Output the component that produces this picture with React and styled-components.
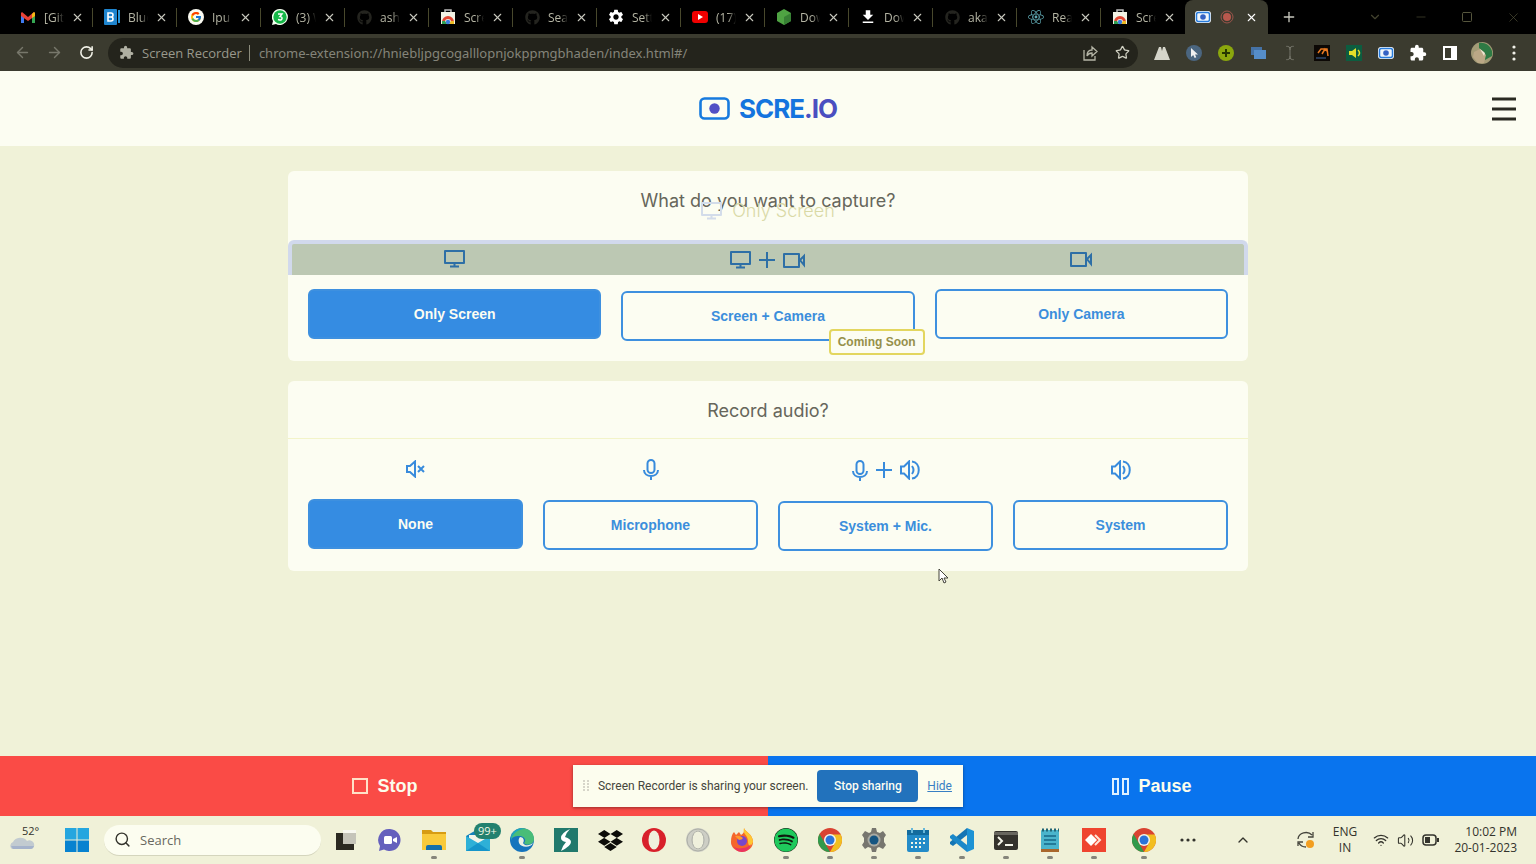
import React from 'react';
import styled, { createGlobalStyle } from 'styled-components';
import { FaDropbox, FaSpotify, FaGithub, FaReact } from 'react-icons/fa';
import { MdSettings, MdDownload, MdExtension } from 'react-icons/md';
import { FcGoogle } from 'react-icons/fc';
import { ArrowLeft, ArrowRight, RotateCw, Star, X, Plus, ChevronDown, ChevronUp, Minus, Square, Search, Wifi, Volume2, TextCursor } from 'lucide-react';

const ui = '"Open Sans", "Noto Sans", sans-serif';
const arial = '"Liberation Sans", Arial, sans-serif';

const GlobalStyle = createGlobalStyle`
  * { box-sizing: border-box; }
  body { margin: 0; background: #f0f2d8; font-family: ${ui}; }
  button { font: inherit; color: inherit; background: none; border: 0; padding: 0; cursor: pointer; }
  h1, h2 { margin: 0; font-weight: 400; }
  svg { display: block; flex: none; }
`;

const Desktop = styled.div`
  min-height: 100vh;
  display: flex;
  flex-direction: column;
`;

/* Browser chrome */
const TabStrip = styled.div`
  display: flex;
  height: 34px;
  padding-left: 9px;
  background: #000;
  color: #b5b5a4;
`;
const Tab = styled.div`
  width: 84px;
  display: flex;
  align-items: center;
  padding: 0 7px 0 11px;
  font-size: 12px;
  position: relative;
  &::after {
    content: '';
    position: absolute;
    right: 0;
    top: 8px;
    height: 19px;
    width: 1px;
    background: ${p => (p.$last ? 'transparent' : '#48482c')};
  }
`;
const TabTitle = styled.span`
  width: 20px;
  margin-left: 8px;
  margin-right: 5px;
  overflow: hidden;
  white-space: nowrap;
  mask-image: linear-gradient(90deg, #000 60%, transparent);
`;
const ActiveTab = styled.div`
  width: 83px;
  display: flex;
  align-items: center;
  justify-content: space-between;
  padding: 0 9px 0 10px;
  background: #3b3b2f;
  border-radius: 8px 8px 0 0;
`;
const IconButton = styled.button`
  display: flex;
  flex: none;
  align-items: center;
  justify-content: center;
  width: ${p => p.$w || 16}px;
  height: ${p => p.$h || 16}px;
  color: ${p => p.$color || '#c8c8be'};
`;
const NewTab = styled.div`
  display: flex;
  align-items: center;
  padding-left: 13px;
  flex: 1;
`;
const WindowControls = styled.div`
  display: flex;
  align-items: center;
`;
const Toolbar = styled.div`
  display: flex;
  align-items: center;
  height: 37px;
  padding: 0 6px;
  background: #3b3b2f;
`;
const Omnibox = styled.div`
  flex: 1;
  display: flex;
  align-items: center;
  height: 30px;
  margin-left: 6px;
  padding: 0 0 0 11px;
  border-radius: 15px;
  background: #24241c;
  color: #99998c;
  font-size: 13px;
`;
const SiteName = styled.label`
  margin-left: 8px;
  padding-right: 7px;
  border-right: 1px solid #8c8c7c;
  line-height: 16px;
  white-space: nowrap;
`;
const Address = styled.input`
  flex: 1;
  min-width: 0;
  margin-left: 9px;
  padding: 0;
  border: 0;
  outline: 0;
  background: none;
  color: #84847a;
  font: 13px "Noto Sans", ${ui};
`;
const Extensions = styled.div`
  display: flex;
  margin-left: 8px;
`;

/* Extension page */
const Header = styled.header`
  display: flex;
  align-items: center;
  justify-content: center;
  position: relative;
  height: 75px;
  background: #fcfdf2;
`;
const Brand = styled.h1`
  display: flex;
  align-items: center;
  gap: 9px;
  font: 700 26px Inter, sans-serif;
  letter-spacing: -1px;
  color: #1474de;
`;
const BrandTail = styled.span`
  color: #4a4fc0;
`;
const MenuButton = styled(IconButton)`
  position: absolute;
  right: 20px;
  top: 26px;
`;
const Main = styled.main`
  position: relative;
  flex: 1;
  display: flex;
  flex-direction: column;
  gap: 20px;
  width: 100%;
  max-width: 960px;
  margin: 0 auto;
  padding: 25px 0;
`;
const Card = styled.section`
  position: relative;
  border-radius: 6px;
  background: #fcfdf2;
`;
const CardTitle = styled.h2`
  display: flex;
  align-items: center;
  justify-content: center;
  height: 58px;
  padding-top: 2px;
  border-bottom: 1px solid ${p => (p.$line ? '#f3f4c9' : 'transparent')};
  font: 400 18px Inter, sans-serif;
  color: #66665b;
`;
const Choices = styled.div`
  position: relative;
  display: grid;
  grid-template-columns: repeat(${p => p.$columns}, 1fr);
  align-items: start;
  gap: 20px;
  padding: 20px;
`;
const Choice = styled.div`
  position: relative;
  display: flex;
  flex-direction: column;
  gap: 20px;
`;
const ChoiceIcons = styled.div`
  display: flex;
  align-items: center;
  justify-content: center;
  gap: 8px;
  height: ${p => p.$h}px;
  color: ${p => p.$color || '#388bdc'};
`;
const ChoiceButton = styled.button`
  height: 50px;
  border: 2px solid #3e90df;
  border-radius: 6px;
  background: ${p => (p.$on ? '#358ce2' : 'transparent')};
  color: ${p => (p.$on ? '#fcfdf2' : '#3b8edc')};
  font: 700 14px ${arial};
`;
const Soon = styled.span`
  position: absolute;
  right: -10px;
  bottom: -14px;
  padding: 0 7px;
  border: 2px solid #e3d65f;
  border-radius: 4px;
  background: #fcfdf2;
  color: #96904a;
  font: 700 12px/22px ${arial};
`;
const FadingPanel = styled.div`
  position: absolute;
  left: 0;
  right: 0;
  top: 69px;
  height: 35px;
  border: 4px solid #d1d9ec;
  border-bottom: 0;
  border-radius: 6px 6px 0 0;
  background: #bcc8b3;
`;
const FadingTitle = styled.div`
  position: absolute;
  left: 0;
  right: 0;
  top: 29px;
  display: flex;
  align-items: center;
  justify-content: center;
  gap: 10px;
  font: 300 18px/22px Inter, sans-serif;
  color: #d9d9a6;
`;
const FadingIcon = styled.span`
  color: #d3dcea;
`;
const Pointer = styled.svg`
  position: absolute;
  left: 650px;
  top: 422px;
`;

const Actions = styled.footer`
  position: relative;
  display: grid;
  grid-template-columns: 1fr 1fr;
  height: 60px;
`;
const Action = styled.button`
  display: flex;
  align-items: center;
  justify-content: center;
  gap: 9px;
  background: ${p => p.$bg};
  color: #fcfdec;
  font: 700 18px ${arial};
`;
const ShareBar = styled.div`
  position: absolute;
  top: 9px;
  left: 0;
  right: 0;
  width: 390px;
  height: 42px;
  margin: 0 auto;
  padding: 0 11px 0 10px;
  display: flex;
  align-items: center;
  justify-content: space-between;
  background: #fcfdee;
  box-shadow: 0 1px 3px #0006;
  font: 12px Roboto, sans-serif;
  color: #46463c;
  white-space: nowrap;
`;
const StopSharing = styled.button`
  width: 101px;
  height: 32px;
  border-radius: 4px;
  background: #2272bc;
  color: #fcfdf2;
  font-weight: 500;
`;
const HideLink = styled.a`
  color: #397fc4;
`;

/* Windows taskbar */
const Taskbar = styled.nav`
  display: flex;
  align-items: center;
  height: 48px;
  background: #f0f1d8;
  color: #33332c;
  font-size: 12px;
`;
const Weather = styled.div`
  position: relative;
  width: 55px;
  height: 48px;
  padding: 17px 0 0 9px;
`;
const Degrees = styled.span`
  position: absolute;
  left: 22px;
  top: 7px;
  font-size: 11px;
`;
const SearchBox = styled.label`
  display: flex;
  flex: none;
  align-items: center;
  gap: 9px;
  width: 217px;
  height: 31px;
  margin: 0 3px 0 5px;
  padding: 0 10px;
  border-radius: 16px;
  border-bottom: 1px solid #d4d5bd;
  background: #fcfdf0;
`;
const SearchInput = styled.input`
  width: 100%;
  border: 0;
  padding: 0;
  outline: 0;
  background: none;
  font: 13px ${ui};
  &::placeholder { color: #68685e; opacity: 1; }
`;
const TaskButton = styled.button`
  position: relative;
  display: flex;
  flex: none;
  align-items: center;
  justify-content: center;
  width: ${p => p.$w || 44}px;
  height: 48px;
  &::after {
    content: '';
    position: absolute;
    bottom: 5px;
    width: 6px;
    height: 3px;
    border-radius: 2px;
    background: ${p => (p.$open ? '#85857b' : 'transparent')};
  }
`;
const Count = styled.span`
  position: absolute;
  left: 18px;
  top: 7px;
  padding: 0 4px;
  border-radius: 8px;
  background: #23816f;
  color: #f4f8e4;
  font-size: 11px;
  line-height: 16px;
`;
const Tray = styled.div`
  display: flex;
  flex: 1;
  align-items: center;
  justify-content: flex-end;
  height: 48px;
  padding-right: 19px;
`;
const TrayText = styled.div`
  flex: none;
  line-height: 16px;
  text-align: ${p => p.$align || 'center'};
  width: ${p => p.$w}px;
`;
const TrayIcons = styled.div`
  display: flex;
  align-items: center;
  gap: 8px;
  margin: 0 6px 0 14px;
`;

/* Icons */
const Svg = ({ w = 24, h = 24, box, children, ...rest }) => (
  <svg width={w} height={h} viewBox={box || `0 0 ${w} ${h}`} fill="none" {...rest}>{children}</svg>
);
const Gmail = () => (
  <Svg w={16} h={16}>
    <path d="M1 4v10h3V7z" fill="#3f7bf0" /><path d="M15 4v10h-3V7z" fill="#35a853" />
    <path d="M1 4l1-1 6 5 6-5 1 1v3l-7 5-7-5z" fill="#e64235" /><path d="M12 5l2-2 1 1v3l-3 2z" fill="#f5b914" />
  </Svg>
);
const BlueDoc = () => (
  <Svg w={16} h={16}>
    <rect width="13" height="16" y="0" rx="1" fill="#1f85cf" /><path d="M14 1h2v13h-2z" fill="#2394da" />
    <path d="M4 4v8h3a2 2 0 0 0 0-4H4h3a2 2 0 0 0 0-4z" stroke="#fff" strokeWidth="1.6" />
  </Svg>
);
const WhatsApp = () => (
  <Svg w={16} h={16}>
    <path d="M8 0a8 8 0 1 1-4 15l-4 1 1-4A8 8 0 0 1 8 0z" fill="#f4fff0" /><circle cx="8" cy="8" r="6.7" fill="#15b848" />
    <path d="M6 5h4L8 7.500c3 0 2.500 4-.2 3.500L6 10.500" stroke="#fff" strokeWidth="1.400" />
  </Svg>
);
const WebStore = () => (
  <Svg w={16} h={16}>
    <path d="M5 4V1h6v3" stroke="#bbb" strokeWidth="1.500" /><path d="M1 3h14v12H1z" fill="#f2f2e4" />
    <path d="M2 13a6 6 0 0 1 12 0l-3 0a3 3 0 0 0-6 0z" fill="#e14632" />
    <path d="M2 12h3l2 3H2z" fill="#2ea052" /><path d="M11 12h3v3H9z" fill="#edbb24" /><circle cx="8" cy="13" r="2.200" fill="#3c7de0" />
  </Svg>
);
const GoogleBadge = () => (
  <Svg w={16} h={16}><circle cx="8" cy="8" r="8" fill="#fbfbf2" /><FcGoogle x={2} y={2} size={12} /></Svg>
);
const YouTube = () => (
  <Svg w={16} h={16}><rect y="2" width="16" height="12" rx="3" fill="#f00000" /><path d="M6 5l5 3-5 3z" fill="#fff" /></Svg>
);
const Hexagon = () => (
  <Svg w={16} h={16}><path d="M8 0l7 4v8l-7 4-7-4V4z" fill="#4fa343" /><path d="M8 8l7-4v8l-7 4z" fill="#378034" /></Svg>
);
const Recorder = () => (
  <Svg w={16} h={16}>
    <rect x="0" y="2" width="16" height="12" rx="3" fill="#f0f5fa" /><rect x="1.500" y="3.500" width="13" height="9" rx="2" stroke="#277bdc" strokeWidth="1.500" />
    <circle cx="8" cy="8" r="2.800" fill="#3461c4" />
  </Svg>
);
const Recording = () => (
  <Svg w={14} h={14}><circle cx="7" cy="7" r="6" stroke="#9c554b" /><circle cx="7" cy="7" r="4" fill="#b9584d" /></Svg>
);
const Share = () => (
  <Svg w={16} h={16} stroke="#b5b5a6" strokeWidth="1.300"><path d="M2 5v10h11v-4M5 11c0-4 2-6 5-6V2l5 4.500-5 4.500V8c-2 0-4 1-5 3z" /></Svg>
);
const Mountains = () => (
  <Svg w={16} h={16}><path d="M0 15L5 2h2l1 4 1-4h2l5 13z" fill="#d5d5ca" /></Svg>
);
const CursorBadge = () => (
  <Svg w={16} h={16}><circle cx="8" cy="8" r="8" fill="#4b6680" /><path d="M5 3v9l2.200-2 1.500 3 1.600-.8L9 9.500h3z" fill="#f0f0f0" /></Svg>
);
const AddBadge = () => (
  <Svg w={16} h={16}><circle cx="8" cy="8" r="8" fill="#8ba70d" /><path d="M8 4v8M4 8h8" stroke="#253800" strokeWidth="2" /></Svg>
);
const StackedWindows = () => (
  <Svg w={16} h={16}><path d="M1 2h11v8H1z" fill="#4572a6" /><path d="M4 5h12v9H4z" fill="#558dc9" /></Svg>
);
const Chart = () => (
  <Svg w={16} h={16}><path d="M0 0h16v16H0z" fill="#0c0805" /><path d="M2 13h10" stroke="#4368a0" /><path d="M4 8l3-4h6l1 7M8 9l3-5 3 3" stroke="#e77821" strokeWidth="1.500" /></Svg>
);
const SoundBadge = () => (
  <Svg w={16} h={16}><path d="M0 0h16v16H0z" fill="#0c5d40" /><path d="M3 6h3l4-3v10l-4-3H3z" fill="#e3df2a" /><path d="M12 5q3 3 0 6" stroke="#e3df2a" strokeWidth="1.500" /></Svg>
);
const SidePanel = () => (
  <Svg w={16} h={16}><rect x="2" y="2" width="12" height="12" stroke="#fff" strokeWidth="2" /><path d="M9 2h5v12H9z" fill="#fff" /></Svg>
);
const Avatar = () => (
  <Svg w={22} h={22}>
    <circle cx="11" cy="11" r="11" fill="#a39b76" /><path d="M8 1a11 11 0 0 1 13 13l-7 4-1-8-5-4z" fill="#2e7a44" />
    <path d="M3 10l6-3 6 6-2 8H7l-5-6z" fill="#bba886" /><path d="M9 7l5 4-1 3z" fill="#eee5d2" />
  </Svg>
);
const Dots = ({ vertical, color = '#33332c' }) => (
  <Svg w={16} h={16} fill={color}>
    {[2, 8, 14].map(n => <circle key={n} cx={vertical ? 8 : n} cy={vertical ? n : 8} r="1.600" fill={color} />)}
  </Svg>
);
const Logo = () => (
  <Svg w={31} h={24}><rect x="1.500" y="1.500" width="28" height="20" rx="4" stroke="#167ade" strokeWidth="2.600" /><circle cx="15.500" cy="11.500" r="5.200" fill="#5150c5" /></Svg>
);
const Burger = () => (
  <Svg w={24} h={24} stroke="#2a2a22" strokeWidth="3"><path d="M0 2h24M0 12h24M0 22h24" /></Svg>
);
const Monitor = () => (
  <Svg w={21} h={18} stroke="currentColor" strokeWidth="2"><path d="M1 1h19v12H1zM10.500 13v3M6 16.500h9" strokeLinejoin="round" /></Svg>
);
const Camera = () => (
  <Svg w={23} h={16} stroke="currentColor" strokeWidth="2"><path d="M1 2h15v13H1z" strokeLinejoin="round" /><path d="M17 8l4-4v9z" /></Svg>
);
const Cross = () => (
  <Svg w={16} h={16} stroke="currentColor" strokeWidth="2"><path d="M8 0v16M0 8h16" /></Svg>
);
const Mic = () => (
  <Svg w={16} h={21} stroke="currentColor" strokeWidth="2"><rect x="4.500" y="1" width="7" height="13" rx="3.500" /><path d="M1 11c0 8 14 8 14 0M8 17v4" /></Svg>
);
const Mute = () => (
  <Svg w={19} h={18} stroke="currentColor" strokeWidth="2"><path d="M1 6h3l5-4.500v15L4 12H1zM12 6l6 6M18 6l-6 6" /></Svg>
);
const Sound = () => (
  <Svg w={20} h={20} stroke="currentColor" strokeWidth="2"><path d="M1 6.500h3l5-5v17l-5-5H1zM12 6q3 4 0 8M12 1.500c9 1 9 16 0 17" /></Svg>
);
const StopIcon = () => <Svg w={18} h={18}><path d="M2 2h14v14H2z" stroke="#ffe1c8" strokeWidth="2" /></Svg>;
const PauseIcon = () => <Svg w={17} h={17}><path d="M1 1h5v15H1zM11 1h5v15h-5z" stroke="#def0ff" strokeWidth="2" /></Svg>;
const Grip = () => <Svg w={6} h={12}><path d="M1 0v12M5 0v12" stroke="#d6d5c9" strokeWidth="2" strokeDasharray="2 1" /></Svg>;
const Cloud = () => (
  <Svg w={26} h={17}><path d="M3 16a4 4 0 0 1 1-7 8 7 0 0 1 14-1 4 4 0 0 1 5 8z" fill="#c2cbd0" /><path d="M2 13h23q-1 3-4 3H4z" fill="#a5b3cb" /></Svg>
);
const WinLogo = () => (
  <Svg w={24} h={24}><path d="M0 0h11.500v11.500H0zM12.500 0H24v11.500H12.500z" fill="#25a6df" /><path d="M0 12.500h11.500V24H0zM12.500 12.500H24V24H12.500z" fill="#0782d0" /></Svg>
);
const TaskView = () => (
  <Svg w={20} h={20}><path d="M7 0h13v14H7z" fill="#c5c4b9" /><path d="M7 0h13v3H7z" fill="#f8f8f0" /><path d="M0 3h7v11h11v6H0z" fill="#2b2921" /></Svg>
);
const Teams = () => (
  <Svg><path d="M12 1a11 11 0 1 1-6 20.500L1 23l1-5A11 11 0 0 1 12 1z" fill="#6560bd" /><rect x="6" y="8" width="8" height="8" rx="1.500" fill="#fff" /><path d="M15 11l4-2v6l-4-2z" fill="#fff" /></Svg>
);
const Folder = () => (
  <Svg><path d="M0 2h9l2 2h13v18H0z" fill="#d79c13" /><path d="M0 6h24v16H0z" fill="#f9ca3a" /><path d="M4 22v-3q0-2 2-2h12q2 0 2 2v3z" fill="#1570aa" /></Svg>
);
const Mail = () => (
  <Svg><path d="M0 8l12-7 12 7v15H0z" fill="#1482bb" /><path d="M3 7h18v6l-9 5-9-5z" fill="#f2f4e8" /><path d="M0 8l12 7L24 8v15H0z" fill="#2eb0d7" /><path d="M0 23l12-8 12 8z" fill="#1595ca" /></Svg>
);
const Edge = () => (
  <Svg><circle cx="12" cy="12" r="12" fill="#1574bd" /><path d="M1 9C4-4 24-2 24 11c0 6-8 7-10 4 3-3 0-7-5-7-4 0-7 1-8 4z" fill="#49bd78" /><path d="M1 9C3 2 9-1 15 1 7 1 2 6 1 13z" fill="#1aa5c5" /><path d="M10 9c3 0 5 3 3 6 2 4 8 2 10 0-2 5-12 5-14 0-1-3 0-5 1-6z" fill="#edf1e3" /></Svg>
);
const Stylus = () => (
  <Svg><path d="M0 0h24v24H0z" fill="#21796c" /><path d="M16 1q-9 4-9 9 0 3 5 4-3 3-5 9 10-5 10-9 0-3-6-5 1-4 5-8z" fill="#fff" /></Svg>
);
const Opera = ({ pale }) => (
  <Svg><circle cx="12" cy="12" r="12" fill={pale ? '#cdcec5' : '#d8202b'} /><ellipse cx="12" cy="12" rx="5.500" ry="9.500" fill="#eff0dc" />{pale && <><circle cx="12" cy="12" r="11" stroke="#aeb0a8" /><ellipse cx="12" cy="12" rx="6" ry="9" stroke="#aeb0a8" /></>}</Svg>
);
const Firefox = () => (
  <Svg><path d="M14 0c1 4 9 6 9 14a11 10 0 0 1-22 0C1 9 2 6 4 4l2 3 3-3 2 3q4-2 3-7z" fill="#f5652b" /><path d="M14 0c1 4 9 6 9 14-2 5-5 5-5-1s-6-7-4-13z" fill="#ffc631" /><path d="M1 14q2 8 12 6 6-1 8-4-2 8-9 8T1 14z" fill="#e93461" /><circle cx="12" cy="13" r="5" fill="#7946ca" /><path d="M5 8q5-1 8 2-1 2-4 2z" fill="#ff9a2d" /></Svg>
);
const Chrome = () => (
  <Svg><circle cx="12" cy="12" r="12" fill="#d94332" /><path d="M1.600 6L8 17l4 7A12 12 0 0 1 1.600 6z" fill="#319a4b" /><path d="M12 6.500h10.700A12 12 0 0 1 12 24l5-9z" fill="#f2be20" /><circle cx="12" cy="12" r="6" fill="#f5f5ea" /><circle cx="12" cy="12" r="4.500" fill="#2b73d9" /></Svg>
);
const Gear = () => (
  <Svg><path d="M10 0h4l1 4 3 1 3-2 3 4-2 3v4l2 3-3 4-4-2-2 1-1 4h-4l-1-4-3-1-3 2-3-4 2-3v-4L0 7l3-4 4 2 2-1z" fill="#77766f" /><circle cx="12" cy="12" r="6.500" fill="#a9aaa2" /><circle cx="12" cy="12" r="4.500" fill="#155581" /></Svg>
);
const Calendar = () => (
  <Svg w={22}><rect y="2" width="22" height="22" rx="2" fill="#238bc8" /><path d="M0 2h22v5H0z" fill="#136b9d" /><path d="M5 0v5M17 0v5" stroke="#68b8db" strokeWidth="2" /><path d="M8 11h10M4 15h14M4 19h10" stroke="#f3f6e8" strokeWidth="2" strokeDasharray="2 2" /></Svg>
);
const CodeEditor = () => (
  <Svg><path d="M17 0l7 3v18l-7 3z" fill="#1d92d4" /><path d="M17 0v7L3 18l-3-2v-2z" fill="#1475b4" /><path d="M17 24v-7L3 6 0 8v2z" fill="#1b88c9" /></Svg>
);
const Terminal = () => (
  <Svg><rect y="3" width="24" height="19" rx="2" fill="#34322c" /><path d="M0 7V4h24v3z" fill="#68665e" /><path d="M4 9l4 4-4 4M11 17h8" stroke="#f4f4e8" strokeWidth="2" /></Svg>
);
const Notepad = () => (
  <Svg w={20}><rect x="1" y="2" width="18" height="21" rx="1" fill="#4ab4cc" /><path d="M1 21h18v3H1z" fill="#a9672b" /><path d="M4 8h12M4 12h12M4 16h12" stroke="#176786" strokeWidth="1.500" /><path d="M2 2h17" stroke="#216574" strokeWidth="3" strokeDasharray="2 2" /></Svg>
);
const AnyDesk = () => (
  <Svg><path d="M0 0h24v24H0z" fill="#ef442f" /><path d="M9 6l6 6-6 6-6-6z" fill="#fff" /><path d="M13 7l5 5-5 5" stroke="#ffe4d8" strokeWidth="2" /></Svg>
);
const Sync = () => (
  <Svg w={18} h={18} stroke="#45453c" strokeWidth="1.300"><path d="M1 8a8 7 0 0 1 14-4M16 1v5h-5M1 15v-4h5M2 12q2 4 7 4" /><circle cx="13" cy="13" r="4" fill="#f29e20" stroke="none" /></Svg>
);
const Battery = () => (
  <Svg w={17} h={12} stroke="#33332c"><rect x="1" y="1" width="13" height="10" rx="3" strokeWidth="1.500" /><path d="M3 3h5v6H3z" fill="#33332c" stroke="none" /><path d="M16 4v4" strokeWidth="2" /></Svg>
);

const tabs = [
  ['[GitHub]', <Gmail />], ['Blue', <BlueDoc />], ['Ipu re', <GoogleBadge />], ['(3) Wh', <WhatsApp />],
  ['ashish', <FaGithub size={15} color="#24241f" />], ['Screen', <WebStore />], ['Search', <FaGithub size={15} color="#24241f" />],
  ['Settings', <MdSettings size={18} color="#fff" />], ['(17) Y', <YouTube />], ['Down', <Hexagon />],
  ['Down', <MdDownload size={18} color="#fff" />], ['akash', <FaGithub size={15} color="#24241f" />], ['React', <FaReact size={16} color="#5fa9b3" />],
  ['Screen', <WebStore />],
];
const extensions = [
  ['Mountains', <Mountains />], ['Pointer', <CursorBadge />], ['Add', <AddBadge />], ['Windows', <StackedWindows />],
  ['Text', <TextCursor size={16} color="#77776c" strokeWidth={1.500} />], ['Charts', <Chart />], ['Volume', <SoundBadge />], ['Recorder', <Recorder />],
  ['Extensions', <MdExtension size={18} color="#fff" />], ['Side panel', <SidePanel />], ['Profile', <Avatar />], ['Menu', <Dots vertical color="#f0f0e8" />],
];
const apps = [
  ['Task view', <TaskView />, 0], ['Chat', <Teams />, 0], ['Files', <Folder />, 1], ['Mail', <Mail />, 0], ['Edge', <Edge />, 1],
  ['Stylus', <Stylus />, 0], ['Dropbox', <FaDropbox size={25} color="#0c0c08" />, 0], ['Opera', <Opera />, 0], ['Opera beta', <Opera pale />, 0],
  ['Firefox', <Firefox />, 0], ['Spotify', <FaSpotify size={24} color="#1fc95c" style={{ background: '#10190f', borderRadius: 12 }} />, 1],
  ['Chrome', <Chrome />, 1], ['Settings', <Gear />, 1], ['Calendar', <Calendar />, 1], ['Code', <CodeEditor />, 1],
  ['Terminal', <Terminal />, 1], ['Notepad', <Notepad />, 1], ['AnyDesk', <AnyDesk />, 1],
];
const capture = [
  { label: 'Only Screen', h: 20, on: true, icons: <Monitor /> },
  { label: 'Screen + Camera', h: 22, soon: true, icons: <><Monitor /><Cross /><Camera /></> },
  { label: 'Only Camera', h: 20, icons: <Camera /> },
];
const audio = [
  { label: 'None', h: 20, on: true, icons: <Mute /> },
  { label: 'Microphone', h: 21, icons: <Mic /> },
  { label: 'System + Mic.', h: 22, icons: <><Mic /><Cross /><Sound /></> },
  { label: 'System', h: 21, icons: <Sound /> },
];

function ChoiceGroup({ items, iconColor }) {
  return (
    <Choices $columns={items.length}>
      {items.map(c => (
        <Choice key={c.label}>
          <ChoiceIcons $h={c.h} $color={iconColor}>{c.icons}</ChoiceIcons>
          <ChoiceButton $on={c.on}>{c.label}</ChoiceButton>
          {c.soon && <Soon>Coming Soon</Soon>}
        </Choice>
      ))}
    </Choices>
  );
}

export default function App() {
  return (
    <Desktop>
      <GlobalStyle />
      <TabStrip>
        {tabs.map(([title, icon], i) => (
          <Tab key={i} $last={i === tabs.length - 1}>
            <IconButton as="span">{icon}</IconButton>
            <TabTitle>{title}</TabTitle>
            <IconButton aria-label="Close tab"><X size={13} /></IconButton>
          </Tab>
        ))}
        <ActiveTab>
          <Recorder /><Recording />
          <IconButton aria-label="Close tab" $color="#fff"><X size={13} /></IconButton>
        </ActiveTab>
        <NewTab><IconButton aria-label="New tab"><Plus size={16} /></IconButton></NewTab>
        <WindowControls>
          <IconButton $w={46} $color="#43432f" aria-label="Tab search"><ChevronDown size={14} /></IconButton>
          <IconButton $w={46} $color="#56563d" aria-label="Minimize"><Minus size={14} strokeWidth={1} /></IconButton>
          <IconButton $w={46} $color="#56563d" aria-label="Maximize"><Square size={12} /></IconButton>
          <IconButton $w={46} $color="#56563d" aria-label="Close"><X size={15} strokeWidth={1} /></IconButton>
        </WindowControls>
      </TabStrip>
      <Toolbar>
        <IconButton $w={32} $h={32} $color="#77776b" aria-label="Back"><ArrowLeft size={17} /></IconButton>
        <IconButton $w={32} $h={32} $color="#77776b" aria-label="Forward"><ArrowRight size={17} /></IconButton>
        <IconButton $w={32} $h={32} $color="#f2f2e8" aria-label="Reload"><RotateCw size={15} strokeWidth={2.500} /></IconButton>
        <Omnibox>
          <MdExtension size={15} color="#b0b0a2" />
          <SiteName htmlFor="address">Screen Recorder</SiteName>
          <Address id="address" defaultValue="chrome-extension://hniebljpgcogalllopnjokppmgbhaden/index.html#/" />
          <IconButton $w={32} aria-label="Share"><Share /></IconButton>
          <IconButton $w={32} $color="#d0d0c2" aria-label="Bookmark"><Star size={15} /></IconButton>
        </Omnibox>
        <Extensions>
          {extensions.map(([name, icon]) => <IconButton key={name} $w={32} $h={32} aria-label={name}>{icon}</IconButton>)}
        </Extensions>
      </Toolbar>

      <Header>
        <Brand><Logo /><span>SCRE<BrandTail>.IO</BrandTail></span></Brand>
        <MenuButton $w={24} $h={24} aria-label="Menu"><Burger /></MenuButton>
      </Header>
      <Main>
        <Card>
          <FadingTitle><FadingIcon><Monitor /></FadingIcon>Only Screen</FadingTitle>
          <CardTitle>What do you want to capture?</CardTitle>
          <FadingPanel />
          <ChoiceGroup items={capture} iconColor="#2e6fa6" />
        </Card>
        <Card>
          <CardTitle $line>Record audio?</CardTitle>
          <ChoiceGroup items={audio} />
        </Card>
        <Pointer width="10" height="16" viewBox="0 0 10 16">
          <path d="M1 1v12l3-3 2 5 2-1-2-4h4z" fill="#fff" stroke="#44443b" />
        </Pointer>
      </Main>

      <Actions>
        <Action $bg="#fa4b46"><StopIcon />Stop</Action>
        <Action $bg="#0974ee"><PauseIcon />Pause</Action>
        <ShareBar>
          <Grip />
          <span>Screen Recorder is sharing your screen.</span>
          <StopSharing>Stop sharing</StopSharing>
          <HideLink href="#hide">Hide</HideLink>
        </ShareBar>
      </Actions>

      <Taskbar>
        <Weather><Cloud /><Degrees>52°</Degrees></Weather>
        <TaskButton aria-label="Start"><WinLogo /></TaskButton>
        <SearchBox>
          <Search size={17} />
          <SearchInput placeholder="Search" aria-label="Search" />
        </SearchBox>
        {apps.map(([name, icon, open]) => (
          <TaskButton key={name} $open={open} aria-label={name}>{icon}{name === 'Mail' && <Count>99+</Count>}</TaskButton>
        ))}
        <TaskButton $w={56} $open aria-label="Chrome profile"><Chrome /></TaskButton>
        <TaskButton $w={32} aria-label="More"><Dots /></TaskButton>
        <Tray>
          <TaskButton $w={76} aria-label="Hidden icons"><ChevronUp size={16} /></TaskButton>
          <TaskButton $w={50} aria-label="Updates"><Sync /></TaskButton>
          <TrayText $w={28}>ENG<br />IN</TrayText>
          <TrayIcons><Wifi size={16} strokeWidth={2} /><Volume2 size={17} strokeWidth={1.500} /><Battery /></TrayIcons>
          <TrayText $w={72} $align="right">10:02 PM<br />20-01-2023</TrayText>
        </Tray>
      </Taskbar>
    </Desktop>
  );
}
